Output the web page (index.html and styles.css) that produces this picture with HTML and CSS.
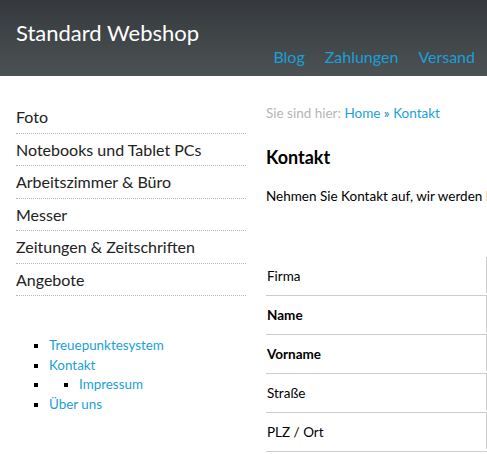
FILE: index.html
```html
<!DOCTYPE html>
<html lang="de">
<head>
<meta charset="utf-8">
<title>Standard Webshop – Kontakt</title>
<link rel="stylesheet" href="styles.css">
</head>
<body>
<header class="header">
  <div class="site-title">Standard Webshop</div>
  <nav class="top-nav">
    <a href="#">Blog</a>
    <a href="#">Zahlungen</a>
    <a href="#">Versand</a>
  </nav>
</header>
<div class="main">
  <aside class="sidebar">
    <ul class="categories">
      <li>Foto</li>
      <li>Notebooks und Tablet PCs</li>
      <li>Arbeitszimmer &amp; Büro</li>
      <li>Messer</li>
      <li>Zeitungen &amp; Zeitschriften</li>
      <li>Angebote</li>
    </ul>
    <ul class="pages">
      <li><a href="#">Treuepunktesystem</a></li>
      <li><a href="#">Kontakt</a></li>
      <li><ul class="subpages"><li><a href="#">Impressum</a></li></ul></li>
      <li><a href="#">Über uns</a></li>
    </ul>
  </aside>
  <section class="content">
    <div class="breadcrumb">Sie sind hier: <a href="#">Home</a> <span class="sep">»</span> <a href="#">Kontakt</a></div>
    <h1 class="page-title">Kontakt</h1>
    <p class="intro">Nehmen Sie Kontakt auf, wir werden Ihre Anfrage umgehend beantworten.</p>
    <div class="form">
      <div class="form-row"><div class="label">Firma</div><div class="field"></div></div>
      <div class="form-row"><div class="label required">Name</div><div class="field"></div></div>
      <div class="form-row"><div class="label required">Vorname</div><div class="field"></div></div>
      <div class="form-row"><div class="label">Straße</div><div class="field"></div></div>
      <div class="form-row"><div class="label">PLZ / Ort</div><div class="field"></div></div>
    </div>
  </section>
</div>
</body>
</html>
```

FILE: styles.css
```css
html, body {
  margin: 0;
  padding: 0;
  overflow: hidden;
  background: #fff;
}
body {
  font-family: Lato, "Liberation Sans", sans-serif;
  color: #222;
}
a {
  color: #1a9fd9;
  text-decoration: none;
}
.header {
  height: 76px;
  box-sizing: border-box;
  background: linear-gradient(to bottom, #35393d 0%, #4c5254 100%);
  padding: 19px 11px 0 16px;
  display: flex;
  flex-direction: column;
}
.site-title {
  color: #fff;
  font-size: 22px;
  line-height: 28px;
}
.top-nav {
  display: flex;
  justify-content: flex-end;
  gap: 20px;
  font-size: 16px;
  line-height: 20px;
  margin-left: auto;
  margin-right: 1px;
}
.top-nav a {
  color: #1a9fd9;
}
.main {
  display: flex;
  padding: 25px 0 0 16px;
  width: 700px;
}
.sidebar {
  width: 230px;
  flex: none;
}
.categories {
  list-style: none;
  margin: 0;
  padding: 0;
}
.categories li {
  font-size: 16px;
  line-height: 19px;
  padding: 6px 0 6.5px;
  border-bottom: 1px dotted #b8b8b8;
  color: #222;
}
.pages {
  list-style: square;
  margin: 40px 0 0;
  padding: 0 0 0 33px;
  font-size: 13.4px;
  line-height: 19.5px;
}
.pages li::marker {
  color: #000;
}
.subpages {
  list-style: square;
  margin: 0;
  padding: 0 0 0 30px;
}
.content {
  margin-left: 20px;
  width: 460px;
  flex: none;
}
.breadcrumb {
  font-size: 13.5px;
  line-height: 18px;
  color: #b5b5b5;
  padding-top: 3px;
}
.breadcrumb .sep {
  color: #2a7fb5;
}
.page-title {
  font-size: 18px;
  font-weight: bold;
  color: #000;
  margin: 24px 0 0;
  line-height: 22px;
}
.intro {
  font-size: 13.5px;
  line-height: 18px;
  color: #000;
  margin: 19px 0 0;
  white-space: nowrap;
}
.form {
  margin-top: 52px;
}
.form-row {
  display: flex;
  border-bottom: 1px solid #cccccc;
  height: 39px;
  box-sizing: border-box;
}
.label {
  width: 219px;
  flex: none;
  padding-left: 1px;
  font-size: 13.5px;
  color: #000;
  display: flex;
  align-items: center;
}
.label.required {
  font-weight: bold;
}
.field {
  flex: 1;
  border-left: 1px solid #cccccc;
  margin-bottom: 2px;
}
```
